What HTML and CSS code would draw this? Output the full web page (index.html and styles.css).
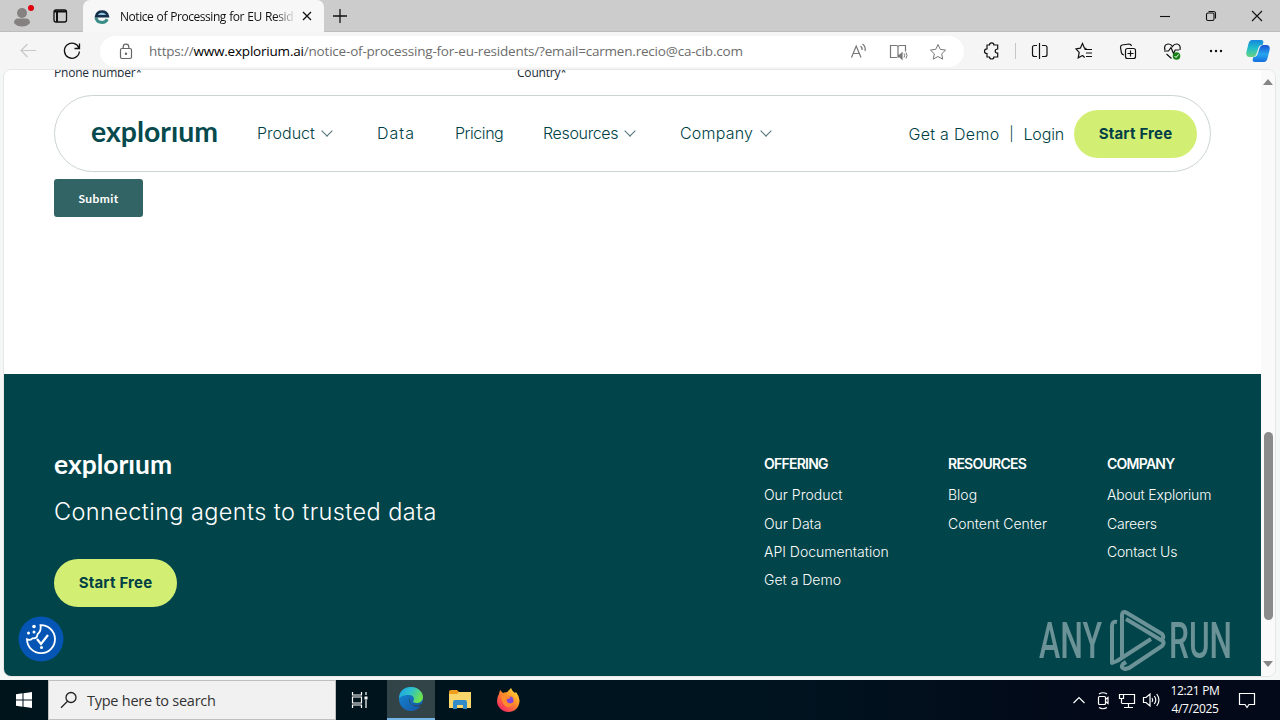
FILE: index.html
```html
<!DOCTYPE html>
<html lang="en">
<head>
  <meta charset="UTF-8">
  <title>Notice of Processing for EU Residents</title>
  <link rel="stylesheet" href="styles.css">
</head>
<body>

  <!-- browser tabs -->
  <div class="tabbar">
    <div class="tab-tools">
      <svg width="83" height="32" viewBox="0 0 83 32">
        <circle cx="22" cy="13" r="5" fill="#858180"/>
        <path d="M14 23q0-4.500 4-4.500h8q4 0 4 4.500-3 3.500-8 3.500t-8-3.500z" fill="#858180"/>
        <circle cx="31" cy="8" r="3" fill="#e3000f"/>
        <rect x="54" y="10" width="12.500" height="12" rx="2" fill="none" stroke="#111" stroke-width="1.300"/>
        <path d="M54 11.500h12.500M57 12v10" stroke="#111" stroke-width="2"/>
      </svg>
    </div>
    <div class="tab">
      <svg class="favicon" width="16" height="16" viewBox="0 0 16 16">
        <path d="M2 9.500a6 5.700 0 0 0 11.300 1.800" fill="none" stroke="#3b8d87" stroke-width="3"/>
        <path d="M2.200 8.300a5.900 5.800 0 0 1 11.600 0z" fill="#8fc3dd" stroke="#14304b" stroke-width="2.600"/>
      </svg>
      <span class="tab-title">Notice of Processing for EU Resid</span>
      <svg width="10" height="10" viewBox="0 0 10 10"><path d="M1 1l8 8M9 1l-8 8" stroke="#111" stroke-width="1.300"/></svg>
    </div>
    <svg class="new-tab" width="14" height="14" viewBox="0 0 14 14"><path d="M7 0v14M0 7h14" stroke="#111" stroke-width="1.300"/></svg>
    <svg class="window-buttons" width="120" height="32" viewBox="0 0 120 32" fill="none" stroke="#111" stroke-width="1.100">
      <path d="M0 16.500h10"/>
      <rect x="46.500" y="13" width="7.500" height="7.500" rx="1.500"/>
      <path d="M48.500 11.500h5q2 0 2 2v5"/>
      <path d="M92 11l10 10M102 11l-10 10"/>
    </svg>
  </div>

  <!-- address bar -->
  <div class="toolbar">
    <svg width="100" height="38" viewBox="0 0 100 38" fill="none">
      <path d="M36 18.500H21M27.500 12l-6.500 6.500 6.500 6.500" stroke="#c7c7c7" stroke-width="1.200"/>
      <path d="M79 16.200a7.500 7.500 0 1 0 .4 3.300M79.500 11.500v5h-5" stroke="#111" stroke-width="1.300"/>
    </svg>
    <div class="address">
      <svg width="14" height="18" viewBox="0 0 14 18" fill="none" stroke="#666" stroke-width="1.200">
        <rect x="1.500" y="5.500" width="11" height="10" rx="1.500"/>
        <path d="M4.200 5.500V4a2.800 2.800 0 0 1 5.600 0v1.500"/>
        <circle cx="7" cy="10.700" r=".6" fill="#666"/>
      </svg>
      <span class="url">https://<b>www.explorium.ai</b>/notice-of-processing-for-eu-residents/?email=carmen.recio@ca-cib.com</span>
      <svg class="address-icons" width="100" height="20" viewBox="0 0 100 20" fill="none" stroke="#777" stroke-width="1.200">
        <path d="M2.500 15.500L7.200 4l4.800 11.500M4.200 11.500h6.200M11.500 4q2 1.500 1.500 4M13.500 2q3.500 2.500 2.500 7"/>
        <path d="M48 15.500h-6.500V3.500H47q2 0 2 1.500v10.500M49 5Q49 3.500 51 3.500h5.500v6"/>
        <path d="M49.500 13h1.500l2-2v6L51 15h-1.500z" fill="#777"/>
        <path d="M55 11.500q1.500 2 0 4M57 10.500q2 3 0 6" stroke-width="1"/>
        <path d="M89 2.500l2.300 4.900 5.300.7-3.900 3.700 1 5.300-4.700-2.600-4.700 2.600 1-5.300-3.900-3.700 5.300-.7z" stroke-width="1"/>
      </svg>
    </div>
    <svg class="browser-icons" width="316" height="38" viewBox="964 32 316 38" fill="none" stroke="#111" stroke-width="1.200">
      <path d="M987 45h2.500q0-2.200 2.200-2.200t2.200 2.200h3.800v4q-2.500 0-2.500 2.100t2.500 2.100V57h-3.800q0 2-2.200 2t-2.200-2H987v-3.500q-2.500 0-2.500-2.300t2.500-2.300z"/>
      <path d="M1015.500 43v16" stroke="#c6c6c6" stroke-width="1"/>
      <path d="M1037 45.500h-2.500q-2 0-2 2v7q0 2 2 2h2.500M1042 45.500h3q2 0 2 2v7q0 2-2 2h-3M1039.500 43v16"/>
      <path d="M1086.500 48.500l-2-.3-2-4.700-2.200 4.700-4.300.7 3.200 3.500-1 5.400 4.300-2.300M1084.500 49.500h7.500M1086 53h6M1086 56.500h6M1082.500 55.500l2.200 2"/>
      <rect x="1125.500" y="48.500" width="10" height="10" rx="2"/>
      <path d="M1130.500 50.500v6M1127.500 53.500h6M1124 55q-2-.5-2.500-2l-1-5.500q0-2 1.500-2.500l7-1q2 0 2.500 2"/>
      <path d="M1165 50q-1.500-5.500 3-6 3-.2 4.500 2.500 1.500-2.700 4.500-2.500 4 .5 3 6M1164 51h4.500l2.500-3.500 2.500 6 1.700-3.500h4M1166.500 54l5 4.500"/>
      <circle cx="1176.500" cy="56" r="3.800" fill="#168116" stroke="none"/>
      <path d="M1174.500 56l1.500 1.500 2.600-3" stroke="#fff" stroke-width="1"/>
      <g fill="#111" stroke="none"><circle cx="1211" cy="51" r="1.200"/><circle cx="1216" cy="51" r="1.200"/><circle cx="1221" cy="51" r="1.200"/></g>
      <defs>
        <linearGradient id="pilotA" x1="0" y1="0" x2="0" y2="1"><stop offset="0" stop-color="#1687df"/><stop offset=".5" stop-color="#22bfc9"/><stop offset="1" stop-color="#6ad27c"/></linearGradient>
        <linearGradient id="pilotB" x1="0" y1="0" x2="0" y2="1"><stop offset="0" stop-color="#1b52d4"/><stop offset=".55" stop-color="#24a6ed"/><stop offset="1" stop-color="#176de0"/></linearGradient>
      </defs>
      <path d="M1252 40h9q3 0 2.200 3l-.6 2q-3-.5-4.200 3l-2 6q-1 3-4 3h-2.500q-4.500 0-3.500-5l2-8q1-4 3.600-4z" fill="url(#pilotA)" stroke="none"/>
      <path d="M1264 62h-9q-3 0-2.200-3l.6-2q3 .5 4.200-3l2-6q1-3 4-3h2.500q4.500 0 3.500 5l-2 8q-1 4-3.600 4z" fill="url(#pilotB)" stroke="none"/>
    </svg>
  </div>

  <div class="viewport">
    <div class="page">
      <div class="form">
        <div class="labels"><span>Phone number*</span><span>Country*</span></div>
        <button class="submit">Submit</button>
      </div>

      <header class="navbar">
        <svg class="logo" width="128" height="36" viewBox="0 0 128 36"><text x="0" y="26" textLength="127" lengthAdjust="spacingAndGlyphs">explorıum</text></svg>
        <nav class="menu">
          <a>Product <i class="chevron"></i></a>
          <a class="data">Data</a>
          <a class="pricing">Pricing</a>
          <a class="resources">Resources <i class="chevron"></i></a>
          <a class="company">Company <i class="chevron"></i></a>
        </nav>
        <div class="account"><a class="demo">Get a Demo</a><span class="bar">|</span><a class="login">Login</a></div>
        <a class="start">Start Free</a>
      </header>

      <footer class="footer">
        <div class="intro">
          <svg class="logo" width="120" height="32" viewBox="0 0 120 32"><text x="0" y="24" textLength="118" lengthAdjust="spacingAndGlyphs">explorıum</text></svg>
          <p class="tagline">Connecting agents to trusted data</p>
          <a class="start">Start Free</a>
        </div>
        <div class="links">
          <ul>
            <li class="title">OFFERING</li>
            <li>Our Product</li>
            <li>Our Data</li>
            <li>API Documentation</li>
            <li>Get a Demo</li>
          </ul>
          <ul>
            <li class="title">RESOURCES</li>
            <li>Blog</li>
            <li>Content Center</li>
          </ul>
          <ul class="about">
            <li class="title">COMPANY</li>
            <li>About Explorium</li>
            <li>Careers</li>
            <li>Contact Us</li>
          </ul>
        </div>
      </footer>

      <svg class="cookie" width="46" height="46" viewBox="0 0 46 46" fill="none" stroke="#fff" stroke-width="1.800">
        <circle cx="23" cy="23" r="22.500" fill="#0556b4" stroke="none"/>
        <path d="M22.500 9.200A14 14 0 1 1 9 23.300q3 1.500 5.500-1 4.500.5 5-4 4-3 3-9.100z"/>
        <path d="M19 23l4 5 7-9" stroke-width="2.200"/>
        <g fill="#fff" stroke="none"><circle cx="16" cy="10.500" r="1.800"/><circle cx="10.500" cy="17" r="1.500"/><circle cx="16" cy="16" r="1.500"/><circle cx="23.500" cy="31.500" r="1.500"/></g>
      </svg>

      <svg class="watermark" width="200" height="70" viewBox="0 0 200 70">
        <text x="4" y="53" textLength="63" lengthAdjust="spacingAndGlyphs">ANY</text>
        <text x="134" y="53" textLength="63" lengthAdjust="spacingAndGlyphs">RUN</text>
        <g fill="none" stroke-width="4" stroke-linejoin="round">
          <path d="M82 17q-5-1-5 4v37l5-2 34-22"/>
          <path d="M87 53V11q0-6 5-3l35 21q3 4-1 6L91 14"/>
          <path d="M91 57l-3 2q-3 4 2 5l4-1 33-22q3-3 0-6"/>
        </g>
      </svg>
    </div>
    <div class="scrollbar">
      <i class="up"></i>
      <i class="thumb"></i>
      <i class="down"></i>
    </div>
  </div>

  <!-- windows taskbar -->
  <div class="taskbar">
    <div class="task"><svg width="16" height="16" viewBox="0 0 16 16" fill="#fff"><path d="M0 2.200l6.500-.9v6.200H0zM7.500 1.200L16 0v7.500H7.500zM0 8.500h6.500v6.200L0 13.800zM7.500 8.500H16V16l-8.500-1.200z"/></svg></div>
    <div class="search">
      <svg width="18" height="18" viewBox="0 0 18 18" fill="none" stroke="#222" stroke-width="1.300"><circle cx="11" cy="6.500" r="5"/><path d="M7.500 10.200L1 16.700"/></svg>
      <span>Type here to search</span>
    </div>
    <div class="task">
      <svg width="18" height="18" viewBox="0 0 18 18" fill="none" stroke="#fff" stroke-width="1.200"><path d="M1.500 1v3h9V1M1.500 17v-3h9v3M1.500 6h9v6h-9zM15 1v3M15 9v8"/><path d="M13.500 5.500h3v3h-3z" fill="#fff" stroke="none"/></svg>
    </div>
    <div class="task active">
      <svg width="26" height="26" viewBox="0 0 26 26">
        <defs>
          <linearGradient id="edgeTop" x1="0" y1="0" x2="1" y2=".4"><stop offset="0" stop-color="#1b9de2"/><stop offset=".5" stop-color="#2cc0cf"/><stop offset="1" stop-color="#6be052"/></linearGradient>
          <linearGradient id="edgeLow" x1="0" y1="0" x2="1" y2="1"><stop offset="0" stop-color="#1689d4"/><stop offset="1" stop-color="#1454a4"/></linearGradient>
        </defs>
        <circle cx="13" cy="13" r="12" fill="url(#edgeLow)"/>
        <path d="M1 13C1 5 6 1 13 1s12 5 12 10c0 4-3 6-6.500 6-3 0-4-1.200-3-2.500 1-1.500.5-5-4-5.500C6 8.500 1 11 1 13z" fill="url(#edgeTop)"/>
        <path d="M12 12c-1.500 4 2 8 8 7.500l4.500-2-1 2.500c-4 1-8 .5-10.500-2s-2.500-4-1-6z" fill="#334449"/>
      </svg>
    </div>
    <div class="task">
      <svg width="24" height="22" viewBox="0 0 24 22">
        <path d="M1 3q0-2 2-2h6l2 2h11q1 0 1 1v15H1z" fill="#f09e20"/>
        <path d="M1 5h8l2-2h12v16H1z" fill="#fbd66b"/>
        <path d="M5 20v-7q0-2 2-2h10q2 0 2 2v7h-4v-4H9v4z" fill="#328bc8"/>
      </svg>
    </div>
    <div class="task">
      <svg width="26" height="26" viewBox="0 0 26 26">
        <defs><linearGradient id="fox" x1="1" y1="0" x2=".2" y2="1"><stop offset="0" stop-color="#fff044"/><stop offset=".45" stop-color="#ff9426"/><stop offset="1" stop-color="#f52166"/></linearGradient></defs>
        <path d="M3 7l1-4 3 3q2-1 4-.7L15 1q1 3 4 5l1-1q4 5 3.500 9.500C23 21 18 25 12.500 25S1 20.500 1 14q0-4 2-7z" fill="url(#fox)"/>
        <circle cx="13" cy="13.500" r="4.500" fill="#8044d6"/>
        <path d="M5 9q4-2 7 0l3 .5q-1 2.500-4 2.500-1 2 1.500 4 3 1 5-1-1 5-6 5-5-1-6.500-11z" fill="#ff8b2b"/>
      </svg>
    </div>
    <svg class="tray" width="100" height="40" viewBox="1068 680 100 40" fill="none" stroke="#fff" stroke-width="1.200">
      <path d="M1073.500 703l5.500-5.500 5.500 5.500"/>
      <rect x="1098.500" y="696.500" width="7" height="8" rx="1"/><path d="M1105.500 699.500l2.500-2v6l-2.500-2M1099 694q4-2.500 8 0M1099 707.500q4 2.500 8 0"/>
      <path d="M1124 694.500h10.500v9H1122M1128.500 703.500v4M1124 707.500h9M1119.500 694.500h4v4h-4zM1121.500 698.500v5"/>
      <path d="M1143.500 697.500h2.500l4-3.500v12l-4-3.500h-2.500zM1152 698q1.500 2 0 4M1154.300 696q3 4 0 8M1156.700 694q4.500 6 0 12"/>
    </svg>
    <div class="clock"><span>12:21 PM</span><span class="date">4/7/2025</span></div>
    <svg class="notice" width="18" height="18" viewBox="0 0 18 18" fill="none" stroke="#fff" stroke-width="1.200"><path d="M1.500 2.500h15v11H11l-2 3-2-3H1.500z"/></svg>
  </div>

</body>
</html>
```
FILE: styles.css
```css
* {
  box-sizing: border-box;
}

body {
  margin: 0;
  width: 1280px;
  height: 720px;
  overflow: hidden;
  background: #f5f6f6;
  font-family: "Open Sans", "Noto Sans", sans-serif;
  display: flex;
  flex-direction: column;
}

svg {
  display: block;
  flex: none;
}

.tabbar {
  height: 32px;
  background: #cccccc;
  border-bottom: 1px solid #bdbdbd;
  display: flex;
  align-items: center;
  flex: none;
}

.tab-tools {
  width: 83px;
}

.tab {
  width: 241px;
  height: 32px;
  align-self: flex-start;
  padding-left: 11px;
  background: #f7f7f7;
  border-radius: 7px 7px 0 0;
  display: flex;
  align-items: center;
}

.tab-title {
  width: 176px;
  margin: 0 6px 0 10px;
  font-size: 12px;
  letter-spacing: -0.45px;
  word-spacing: 0.6px;
  white-space: nowrap;
  color: #111;
  -webkit-mask-image: linear-gradient(90deg, #000 88%, transparent);
}

.new-tab {
  margin-left: 9px;
}

.window-buttons {
  margin-left: auto;
}

.toolbar {
  height: 37px;
  background: #f5f5f5;
  display: flex;
  flex: none;
}

.address {
  width: 864px;
  height: 31px;
  margin-top: 4px;
  padding: 0 15px 0 19px;
  border-radius: 16px;
  background: #fff;
  display: flex;
  align-items: center;
}

.url {
  margin: -1px 0 0 16px;
  font-size: 13.5px;
  letter-spacing: -0.2px;
  white-space: nowrap;
  color: #6d6d6d;
}

.url b {
  font-weight: normal;
  color: #000;
}

.address-icons {
  margin-left: auto;
}

.viewport {
  width: 1273px;
  height: 608px;
  margin-left: 3px;
  border: 1px solid #e6e6e6;
  border-radius: 8px;
  background: #fff;
  display: flex;
  overflow: hidden;
  flex: none;
}

.page {
  width: 1257px;
  position: relative;
  font-family: Inter, sans-serif;
  font-weight: 300;
  color: #003f46;
}

.form {
  height: 304px;
  padding-left: 50px;
}

.labels {
  display: flex;
  height: 109px;
  font: 12px/16px "Open Sans", sans-serif;
  color: #222d38;
}

.labels span {
  width: 463px;
  margin-top: -5px;
  letter-spacing: -0.2px;
}

.submit {
  width: 89px;
  height: 38px;
  border: 0;
  border-radius: 3px;
  background: #336465;
  color: #fff;
  font: bold 12px Lato, sans-serif;
  letter-spacing: 0.4px;
}

/* floats above the form */
.navbar {
  position: absolute;
  left: 50px;
  top: 25px;
  width: 1157px;
  height: 77px;
  padding: 0 13px 0 36px;
  border: 1px solid #ccd3d3;
  border-radius: 39px;
  background: #fff;
  display: flex;
  align-items: center;
}

.logo text {
  font: bold 28px Lato, sans-serif;
  fill: #064a4e;
}

.menu {
  display: grid;
  grid-template-columns: 120px 78px 88px 137px 100px;
  margin: -2px 0 0 38px;
  font-size: 16px;
  white-space: nowrap;
}

.data {
  letter-spacing: 1px;
}

.pricing {
  letter-spacing: -0.45px;
}

.resources {
  letter-spacing: -0.35px;
}

.company {
  letter-spacing: 0.2px;
}

.chevron {
  display: inline-block;
  width: 8px;
  height: 8px;
  margin: 0 0 4px 4px;
  border: solid #4f7277;
  border-width: 0 1px 1px 0;
  transform: rotate(45deg);
}

.account {
  margin-left: auto;
  display: flex;
  align-items: center;
  font-size: 16px;
}

.demo {
  letter-spacing: 0.3px;
}

.login {
  letter-spacing: -0.15px;
}

.bar {
  width: 24px;
  font-size: 14px;
  text-align: center;
}

.start {
  width: 123px;
  height: 48px;
  margin-left: 10px;
  border-radius: 24px;
  background: #d3ef73;
  font-size: 15px;
  font-weight: 700;
  line-height: 48px;
  letter-spacing: 0.2px;
  text-align: center;
}

.footer {
  height: 303px;
  padding: 76px 50px 0;
  background: #014449;
  color: #fff;
  display: flex;
  justify-content: space-between;
}

.footer .logo text {
  font-size: 26px;
  fill: #fff;
}

.footer .start {
  display: block;
  margin-left: 0;
  color: #003f46;
}

.tagline {
  margin: 14px 0 31px;
  font-size: 23.5px;
  line-height: 32px;
  letter-spacing: 0.4px;
}

.links {
  display: grid;
  grid-template-columns: 124px 99px 104px;
  column-gap: 60px;
}

.links ul {
  margin: 0;
  padding: 0;
  list-style: none;
  font-size: 14px;
  line-height: 28.3px;
  white-space: nowrap;
}

.links .about {
  letter-spacing: -0.2px;
}

.links .title {
  margin-bottom: 3px;
  font-weight: 600;
  letter-spacing: -0.75px;
}

.cookie {
  position: absolute;
  left: 14px;
  top: 546px;
}

.watermark {
  position: absolute;
  left: 1031px;
  top: 535px;
  opacity: 0.5;
}

.watermark text {
  font: 500 50px Roboto, sans-serif;
  fill: #d5dfe3;
}

.watermark g {
  stroke: #d5dfe3;
}

.scrollbar {
  width: 14px;
  height: 606px;
  background: #fafafa;
  display: flex;
  flex-direction: column;
  align-items: center;
}

.scrollbar i {
  flex: none;
}

.up,
.down {
  border: solid transparent;
  border-width: 0 5px;
}

.up {
  margin-top: 9px;
  border-bottom: 6px solid #858585;
}

.thumb {
  width: 9px;
  height: 188px;
  margin: 347px 0 41px;
  border-radius: 5px;
  background: #8b8b8b;
}

.down {
  border-top: 6px solid #858585;
}

.taskbar {
  height: 40px;
  margin-top: auto;
  background: linear-gradient(90deg, #00141c, #001420 60%, #030918 85%);
  display: flex;
  align-items: center;
  color: #fff;
}

.task {
  width: 48px;
  height: 40px;
  display: grid;
  place-items: center;
}

.task + .task {
  margin-left: 1px;
}

.task.active {
  width: 48px;
  margin-left: 3px;
  background: #334449;
  border-bottom: 2px solid #75b5e7;
}

.search {
  width: 288px;
  height: 40px;
  padding-left: 11px;
  border: 1px solid #bfbfbf;
  background: #f1f1f1;
  color: #333;
  font-size: 14.5px;
  display: flex;
  align-items: center;
}

.search span {
  margin-left: 9px;
  letter-spacing: -0.25px;
}

.tray {
  margin-left: auto;
}

.clock {
  width: 54px;
  font-size: 12px;
  line-height: 18px;
  letter-spacing: -0.35px;
  text-align: center;
  white-space: nowrap;
}

.clock span {
  display: block;
}

.notice {
  margin: 0 24px 0 16px;
}
```
